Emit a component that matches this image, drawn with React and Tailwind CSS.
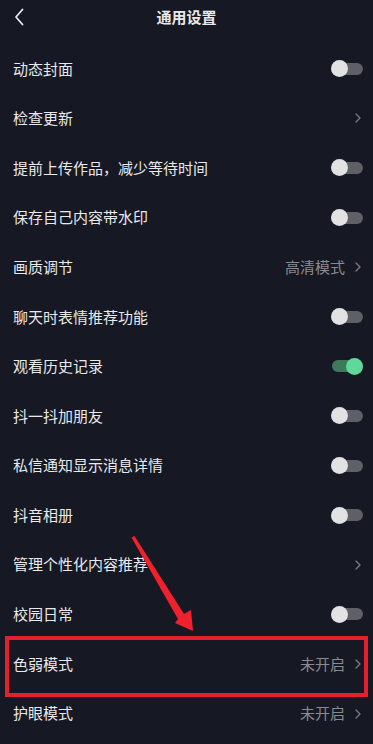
const rows = [
  { label: "动态封面", type: "toggle" },
  { label: "检查更新", type: "link" },
  { label: "提前上传作品，减少等待时间", type: "toggle" },
  { label: "保存自己内容带水印", type: "toggle" },
  { label: "画质调节", type: "link", value: "高清模式" },
  { label: "聊天时表情推荐功能", type: "toggle" },
  { label: "观看历史记录", type: "toggle", on: true },
  { label: "抖一抖加朋友", type: "toggle" },
  { label: "私信通知显示消息详情", type: "toggle" },
  { label: "抖音相册", type: "toggle" },
  { label: "管理个性化内容推荐", type: "link" },
  { label: "校园日常", type: "toggle" },
  { label: "色弱模式", type: "link", value: "未开启" },
  { label: "护眼模式", type: "link", value: "未开启" },
];

function Chevron() {
  return (
    <svg width="6" height="10" viewBox="0 0 6 10" className="shrink-0">
      <path d="M1 1l4 4-4 4" fill="none" stroke="#7b7c82" strokeWidth="1.3" strokeLinecap="round" strokeLinejoin="round" />
    </svg>
  );
}

function Toggle({ on }) {
  return (
    <div className="relative h-[17px] w-[32px]">
      <div
        className={`absolute left-[1px] right-0 top-[2.5px] h-[12px] rounded-full ${on ? "bg-[#3b7a5a]" : "bg-[#5e5f67]"}`}
      />
      <div
        className={`absolute top-0 h-[17px] w-[17px] rounded-full ${on ? "right-0 bg-[#5fd89a]" : "left-0 bg-[#e2e2e4]"}`}
      />
    </div>
  );
}

export default function App() {
  return (
    <div
      className="relative h-[744px] w-[373px] overflow-hidden bg-[#161823] text-[#e9e9eb]"
      style={{ fontFamily: '"Noto Sans CJK SC", "Noto Sans", sans-serif' }}
    >
      <header className="relative flex h-[44px] items-center justify-center pb-[10px]">
        <svg width="12" height="18" viewBox="0 0 12 18" className="absolute left-[13px] top-[8px]">
          <path d="M9.5 1.5L3 9l6.5 7.5" fill="none" stroke="#e9e9eb" strokeWidth="1.8" strokeLinecap="round" strokeLinejoin="round" />
        </svg>
        <h1 className="text-[15px] font-bold">通用设置</h1>
      </header>

      <ul>
        {rows.map((r) => (
          <li key={r.label} className="flex h-[49.6px] items-center justify-between pl-[13px] pr-[12px]">
            <span className="text-[15px]">{r.label}</span>
            {r.type === "toggle" ? (
              <div className="mr-[-2px]">
                <Toggle on={r.on} />
              </div>
            ) : (
              <div className="flex items-center gap-[10px]">
                {r.value && <span className="text-[15px] text-[#8a8b91]">{r.value}</span>}
                <Chevron />
              </div>
            )}
          </li>
        ))}
      </ul>

      <div className="pointer-events-none absolute left-[5px] top-[636px] h-[61px] w-[363px] border-[4px] border-[#e2202e]" />

      {/* annotation arrow */}
      <svg className="pointer-events-none absolute left-0 top-0" width="373" height="744" viewBox="0 0 373 744">
        <polygon points="131.5,537.5 134.5,536 184,614 191,610 193,631 175,623 178,619" fill="#f0202c" />
      </svg>
    </div>
  );
}
